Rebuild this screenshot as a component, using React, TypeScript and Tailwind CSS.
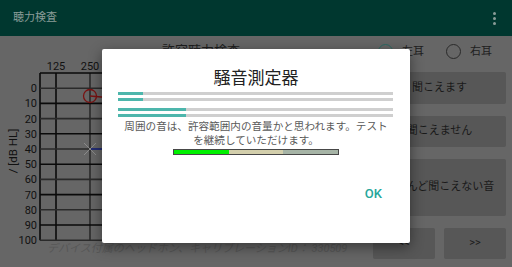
import React from "react"

const FONT = { fontFamily: 'Roboto, "Noto Sans CJK JP", sans-serif' }

const COLS = [40, 56, 90, 124, 159, 183, 207, 231, 255, 279, 303, 327, 350]
// only the first two labels are visible; the rest sit under the dialog
const FREQS = ["125", "250", "500"]
const ROW_TOP = 17
const ROW_H = 15.2

function Audiogram() {
  const rows = Array.from({ length: 12 }, (_, i) => ROW_TOP + i * ROW_H)
  return (
    <svg width="365" height="185" viewBox="0 0 365 185" className="block overflow-visible" style={FONT}>
      {FREQS.map((f, i) => (
        <text key={f} x={COLS[i + 1]} y={14} fontSize="11" textAnchor="middle" fill="#111">
          {f}
        </text>
      ))}
      {rows.slice(1).map((y, i) => (
        <text key={i} x={37} y={y + 4} fontSize="11" textAnchor="end" fill="#111">
          {i * 10}
        </text>
      ))}
      <text x={0} y={0} fontSize="11.5" fill="#111" textAnchor="middle" transform="translate(17 95) rotate(-90)">
        / [dB HL]
      </text>
      {COLS.map((x, i) => (
        <line key={"c" + i} x1={x} y1={ROW_TOP} x2={x} y2={rows[11]} stroke={i % 2 === 0 && i > 0 && i < 12 ? "#2a2a2a" : "#0a0a0a"} strokeWidth="1.6" />
      ))}
      {rows.map((y, i) => (
        <line key={"r" + i} x1={40} y1={y} x2={350} y2={y} stroke={i % 2 === 0 ? "#0a0a0a" : "#2a2a2a"} strokeWidth="1.6" />
      ))}
      <line x1={90} y1={40} x2={124} y2={43} stroke="#7a1212" strokeWidth="1.3" />
      <circle cx={90} cy={40} r={6.5} fill="none" stroke="#7a1212" strokeWidth="1.3" />
      <line x1={90} y1={93} x2={124} y2={93} stroke="#1c2a86" strokeWidth="1.3" />
      <line x1={84} y1={87} x2={96} y2={99} stroke="#8a8a8a" strokeWidth="1" />
      <line x1={96} y1={87} x2={84} y2={99} stroke="#8a8a8a" strokeWidth="1" />
    </svg>
  )
}

function Radio({ label, checked }: { label: string; checked?: boolean }) {
  return (
    <div className="flex items-center gap-[9px]">
      <span
        className={`w-[15px] h-[15px] rounded-full border-[1.5px] ${checked ? "border-[#2c6a64]" : "border-[#2a2a2a]"}`}
      />
      <span className="text-[11px] text-[#1e1e1e] leading-none">{label}</span>
    </div>
  )
}

function GrayButton({ children, className }: { children: React.ReactNode; className: string }) {
  return (
    <div className={`bg-[#575757] rounded-[2px] flex items-center justify-center text-[11px] text-[#1a1a1a] ${className}`}>
      {children}
    </div>
  )
}

export default function App() {
  return (
    <div className="relative w-[512px] h-[267px] overflow-hidden bg-[#666666]" style={FONT}>
      {/* app bar */}
      <div className="h-[36px] bg-[#00372f] flex items-center justify-between pl-[13px] pr-[16px]">
        <span className="text-[11px] text-[#8a9c98]">聴力検査</span>
        <div className="flex flex-col gap-[2px]">
          <span className="w-[3px] h-[3px] rounded-full bg-[#8a9c98]" />
          <span className="w-[3px] h-[3px] rounded-full bg-[#8a9c98]" />
          <span className="w-[3px] h-[3px] rounded-full bg-[#8a9c98]" />
        </div>
      </div>

      <div className="flex">
        {/* chart column */}
        <div className="w-[365px] flex flex-col">
          <div className="h-[20px] pl-[162px] pt-[8px] text-[13px] leading-none text-[#1e1e1e]">許容聴力検査</div>
          <Audiogram />
          <div className="mt-[1px] h-[14px] pl-[47px] text-[11px] leading-[14px] italic text-[#575757] whitespace-nowrap">
            デバイス付属のヘッドホン、キャリブレーションID： 330509
          </div>
        </div>

        {/* controls column */}
        <div className="flex-1 flex flex-col pl-[8px] pr-[6px]">
          <div className="h-[30px] flex items-center gap-[22px] pl-[5px]">
            <Radio label="左耳" checked />
            <Radio label="右耳" />
          </div>
          <div className="mt-[6px] flex flex-col gap-[12px]">
            <GrayButton className="h-[32px]">聞こえます</GrayButton>
            <GrayButton className="h-[31px]">聞こえません</GrayButton>
            <GrayButton className="h-[57px]">ほとんど聞こえない音</GrayButton>
            <div className="flex gap-[9px]">
              <GrayButton className="flex-1 h-[31px] text-[9px]">&lt;&lt;</GrayButton>
              <GrayButton className="flex-1 h-[31px] text-[9px]">&gt;&gt;</GrayButton>
            </div>
          </div>
        </div>
      </div>

      {/* dialog */}
      <div className="absolute left-[102px] top-[49px] w-[308px] h-[194px] bg-white rounded-[2px] shadow-[0_4px_14px_rgba(0,0,0,0.45)] flex flex-col items-center">
        <div className="pt-[19px] text-[17px] leading-[20px] text-[#212121]">騒音測定器</div>
        <div className="mt-[4px] w-[275px] self-start ml-[16px] flex flex-col">
          <div className="h-[3px] bg-[#cfcfcf]">
            <div className="h-full w-[25px] bg-[#4db6ac]" />
          </div>
          <div className="mt-[3px] h-[3px] bg-[#cfcfcf]">
            <div className="h-full w-[25px] bg-[#4db6ac]" />
          </div>
          <div className="mt-[7px] h-[3px] bg-[#cfcfcf]">
            <div className="h-full w-[68px] bg-[#4db6ac]" />
          </div>
          <div className="mt-[3px] h-[3px] bg-[#cfcfcf]">
            <div className="h-full w-[68px] bg-[#4db6ac]" />
          </div>
        </div>
        <p className="mt-[3px] w-[270px] text-center text-[10.6px] leading-[14px] text-[#5a5a5a]">
          周囲の音は、許容範囲内の音量かと思われます。テスト
          <br />
          を継続していただけます。
        </p>
        <div className="mt-[1px] w-[166px] h-[6px] border border-[#474747] flex">
          <div className="flex-1 bg-[#00f000]" />
          <div className="flex-1 bg-[#d3cfac]" />
          <div className="flex-1 bg-[#a6b4a6]" />
        </div>
        <div className="mt-auto mb-[31px] self-end mr-[20px] h-[36px] px-[8px] flex items-center text-[13px] font-medium text-[#26a69a]">
          OK
        </div>
      </div>
    </div>
  )
}
